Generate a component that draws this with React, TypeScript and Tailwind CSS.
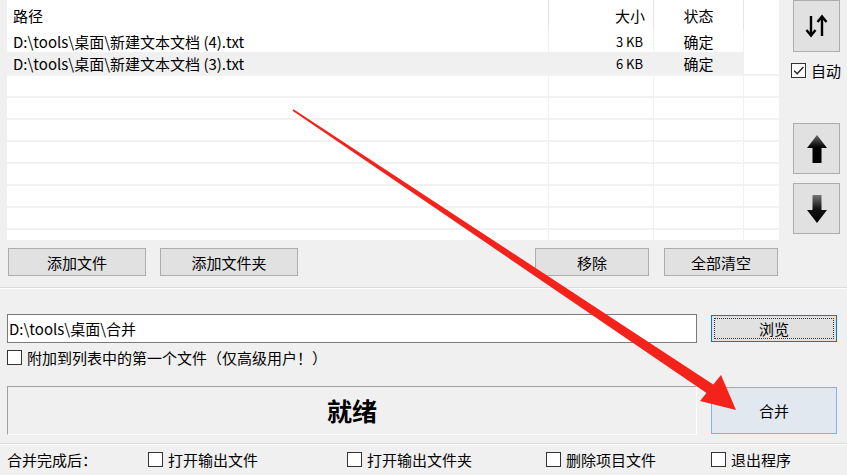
import React from 'react';

const rows = [
  { path: 'D:\\tools\\桌面\\新建文本文档 (4).txt', size: '3 KB', status: '确定', sel: false },
  { path: 'D:\\tools\\桌面\\新建文本文档 (3).txt', size: '6 KB', status: '确定', sel: true },
];

function CheckBox({ checked = false }: { checked?: boolean }) {
  return (
    <span className="inline-flex w-[15px] h-[15px] border border-[#333] bg-white items-center justify-center shrink-0">
      {checked && (
        <svg width="13" height="13" viewBox="0 0 12 12">
          <path d="M2 6.2 L4.8 9 L10.5 2.8" fill="none" stroke="#222" strokeWidth="1.3" />
        </svg>
      )}
    </span>
  );
}

function Btn({ label, w }: { label: string; w: string }) {
  return (
    <div className={`${w} h-[28px] bg-[#e1e1e1] border border-[#adadad] flex items-center justify-center`}>
      {label}
    </div>
  );
}

function ArrowUp() {
  return (
    <svg width="22" height="30" viewBox="0 0 22 30">
      <defs>
        <linearGradient id="gu" x1="0" y1="0" x2="0" y2="1">
          <stop offset="0" stopColor="#6a6a6a" />
          <stop offset="0.45" stopColor="#000" />
          <stop offset="1" stopColor="#000" />
        </linearGradient>
      </defs>
      <path d="M11 1 L21 14 L15.5 14 L15.5 29 L6.5 29 L6.5 14 L1 14 Z" fill="url(#gu)" />
    </svg>
  );
}

function ArrowDown() {
  return (
    <svg width="22" height="30" viewBox="0 0 22 30">
      <defs>
        <linearGradient id="gd" x1="0" y1="0" x2="0" y2="1">
          <stop offset="0" stopColor="#777" />
          <stop offset="0.5" stopColor="#111" />
          <stop offset="1" stopColor="#000" />
        </linearGradient>
      </defs>
      <path d="M6.5 1 L15.5 1 L15.5 16 L21 16 L11 29 L1 16 L6.5 16 Z" fill="url(#gd)" />
    </svg>
  );
}

export default function App() {
  const empty = Array.from({ length: 8 });
  return (
    <div className="relative w-[847px] h-[475px] overflow-hidden bg-[#f0f0f0] text-[15px] text-black font-['Noto_Sans_CJK_SC',sans-serif] leading-none">
      {/* top: list + side buttons */}
      <div className="flex h-[240px]">
        <div className="ml-[7px] w-[772px] h-[240px] bg-white overflow-hidden">
          <div className="grid grid-cols-[542px_105px_90px_35px] h-[30px]">
            <div className="border-r border-[#e5e5e5] pl-[6px] flex items-center">路径</div>
            <div className="border-r border-[#e5e5e5] pr-[8px] flex items-center justify-end">大小</div>
            <div className="border-r border-[#e5e5e5] flex items-center justify-center">状态</div>
            <div />
          </div>
          {rows.map((r, i) => (
            <div key={i} className="grid grid-cols-[542px_105px_90px_35px] h-[22px]">
              <div className={`pl-[6px] flex items-center border-r border-[#f0f0f0] ${r.sel ? 'bg-[#f0f0f0]' : ''}`}>{r.path}</div>
              <div className={`pr-[10px] flex items-center justify-end text-[13px] border-r border-[#f0f0f0] ${r.sel ? 'bg-[#f0f0f0]' : ''}`}>{r.size}</div>
              <div className={`flex items-center justify-center border-r border-[#f0f0f0] ${r.sel ? 'bg-[#f0f0f0]' : ''}`}>{r.status}</div>
              <div />
            </div>
          ))}
          {empty.map((_, i) => (
            <div key={i} className="grid grid-cols-[542px_105px_90px_35px] h-[22px] border-t-2 border-[#f2f2f2]">
              <div className="border-r border-[#f0f0f0]" />
              <div className="border-r border-[#f0f0f0]" />
              <div className="border-r border-[#f0f0f0]" />
              <div />
            </div>
          ))}
        </div>
        <div className="flex flex-col pl-[12px]">
          <div className="ml-[2px] w-[47px] h-[52px] bg-[#e1e1e1] border border-[#adadad] flex items-center justify-center">
            <svg width="26" height="24" viewBox="0 0 26 24">
              <path d="M7 2 L7 21 M2.5 16 L7 21.5 L11.5 16" fill="none" stroke="#000" strokeWidth="2.4" />
              <path d="M18 22 L18 3 M13.5 8 L18 2.5 L22.5 8" fill="none" stroke="#000" strokeWidth="2.4" />
            </svg>
          </div>
          <div className="flex items-center gap-[5px] mt-[11px]">
            <CheckBox checked />
            <span>自动</span>
          </div>
          <div className="ml-[2px] mt-[45px] w-[47px] h-[51px] bg-[#e1e1e1] border border-[#adadad] flex items-center justify-center">
            <ArrowUp />
          </div>
          <div className="ml-[2px] mt-[9px] w-[47px] h-[51px] bg-[#e1e1e1] border border-[#adadad] flex items-center justify-center">
            <ArrowDown />
          </div>
        </div>
      </div>

      {/* buttons row */}
      <div className="flex mt-[8px] h-[28px]">
        <div className="ml-[8px]"><Btn label="添加文件" w="w-[138px]" /></div>
        <div className="ml-[14px]"><Btn label="添加文件夹" w="w-[138px]" /></div>
        <div className="ml-[237px]"><Btn label="移除" w="w-[114px]" /></div>
        <div className="ml-[15px]"><Btn label="全部清空" w="w-[114px]" /></div>
      </div>

      <div className="mt-[11px] h-[2px] border-t border-[#dadada] border-b border-b-white" />

      {/* output path */}
      <div className="flex mt-[25px] items-center">
        <div className="ml-[7px] w-[690px] h-[29px] bg-white border border-[#7a7a7a] flex items-center pl-[1px]">
          D:\tools\桌面\合并
        </div>
        <div className="ml-[14px] w-[126px] h-[27px] bg-[#e1e1e1] border border-[#0078d7] p-[2px]">
          <div className="w-full h-full border border-dotted border-[#333] flex items-center justify-center">浏览</div>
        </div>
      </div>
      <div className="flex items-center gap-[5px] ml-[7px] mt-[7px] h-[15px]">
        <CheckBox />
        <span>附加到列表中的第一个文件（仅高级用户！）</span>
      </div>

      {/* status + merge */}
      <div className="flex mt-[21px]">
        <div className="ml-[7px] w-[690px] h-[49px] border border-[#a0a0a0] border-b-white border-r-white flex items-center justify-center font-bold text-[25px]">
          就绪
        </div>
        <div className="ml-[14px] mt-[1px] w-[126px] h-[47px] bg-[#e1e8f0] border border-[#7eb4ea] flex items-center justify-center">
          合并
        </div>
      </div>

      <div className="mt-[8px] h-[2px] border-t border-[#dadada] border-b border-b-white" />

      {/* after-merge options */}
      <div className="flex items-center h-[29px]">
        <span className="ml-[7px] w-[141px]">合并完成后：</span>
        <div className="w-[199px] flex items-center gap-[5px]"><CheckBox /><span>打开输出文件</span></div>
        <div className="w-[199px] flex items-center gap-[5px]"><CheckBox /><span>打开输出文件夹</span></div>
        <div className="w-[165px] flex items-center gap-[5px]"><CheckBox /><span>删除项目文件</span></div>
        <div className="flex items-center gap-[5px]"><CheckBox /><span>退出程序</span></div>
      </div>

      {/* red annotation arrow */}
      <svg className="absolute left-0 top-0 pointer-events-none" width="847" height="475" viewBox="0 0 847 475">
        <polygon points="292.5,110.8 293.5,109.2 714,385 708,394" fill="#f3221b" />
        <polygon points="736,410 700,401 721,375" fill="#f3221b" />
      </svg>
    </div>
  );
}
